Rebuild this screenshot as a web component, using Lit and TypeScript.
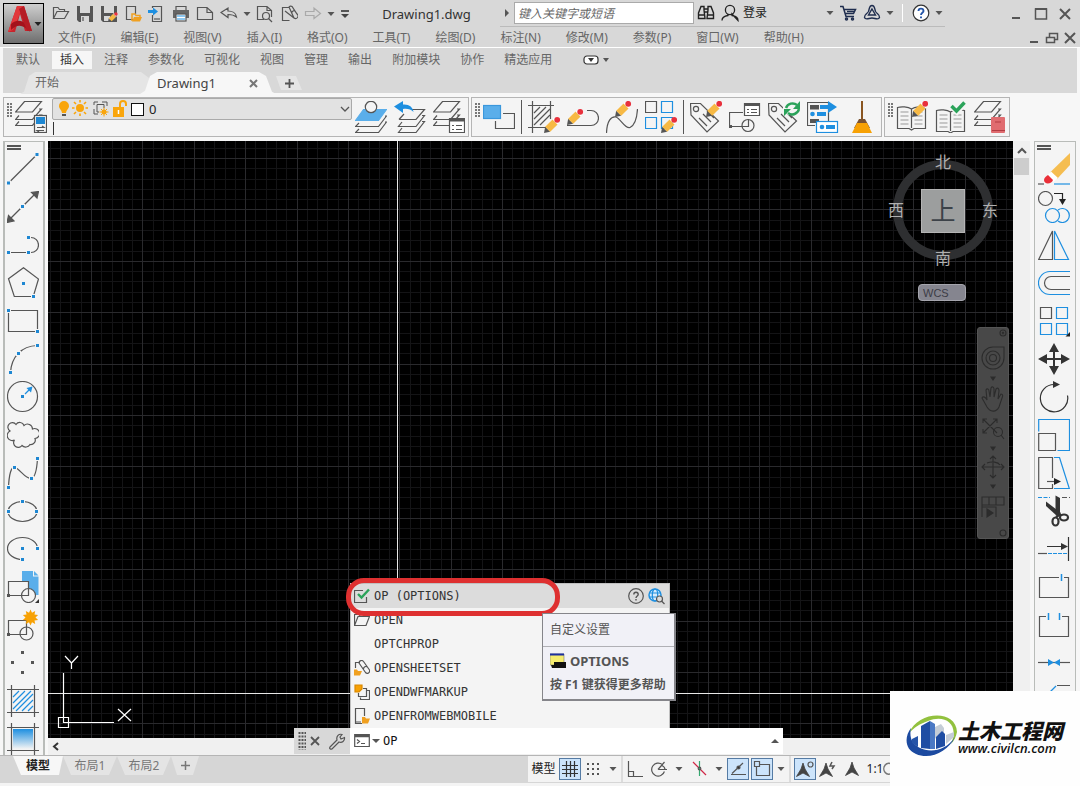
import { LitElement, html, svg, css } from "lit";
import { customElement, state } from "lit/decorators.js";

const draw = (w: number, h: number, body: unknown) =>
  html`<svg width=${w} height=${h} viewBox="0 0 ${w} ${h}" fill="none" stroke="#555" stroke-width="1.2" aria-hidden="true">${body}</svg>`;

const dot = (x: number, y: number) => svg`<rect x=${x - 2.5} y=${y - 2.5} width="5" height="5" fill="#f4f4f4" stroke="none"/><rect x=${x - 1.5} y=${y - 1.5} width="3" height="3" fill="#1e87d2" stroke="none"/>`;
const gdot = (x: number, y: number) => svg`<rect x=${x - 1.5} y=${y - 1.5} width="3" height="3" fill="#555" stroke="none"/>`;
const pencil = (x: number, y: number) => svg`<g transform="translate(${x} ${y})" stroke="none">
  <path d="M0 0L1.2 -6.2L6.2 -1.2Z" fill="#555"/><path d="M1.2 -6.2L8.6 -13.6L13.6 -8.6L6.2 -1.2Z" fill="#f7b944"/>
  <path d="M8.6 -13.6L10 -15L15 -10L13.6 -8.6Z" fill="#fff"/><circle cx="13.2" cy="-13.2" r="2.9" fill="#e8303c"/></g>`;
const sheets = (x: number, y: number) => svg`<g transform="translate(${x} ${y})">
  <path d="M9.5 .5H26.5L17.5 11H.5Z"/><path d="M4 14.5L.5 18.5H17.5L26.5 8H24"/><path d="M4 20.5L.5 24.5H17.5L26.5 14H24"/></g>`;
const burst = (x: number, y: number, r: number) => {
  const p: string[] = [];
  for (let i = 0; i < 20; i++) {
    const a = (Math.PI * i) / 10;
    const q = i % 2 ? r * 0.62 : r;
    p.push(`${(x + q * Math.sin(a)).toFixed(1)},${(y - q * Math.cos(a)).toFixed(1)}`);
  }
  return svg`<polygon points=${p.join(" ")} fill="#f7a104" stroke="none"/>`;
};
const tag = svg`<path d="M.5 2.500H10.500L28.500 20L17 31L1 14Z"/><circle cx="6" cy="8" r="2.600"/><path d="M9 17L17 25M13 13L21 21M17 10L24 17"/>`;
const book = svg`<path d="M15.500 8C12 5.500 5 5.500 1.500 6.500V27.500H13L15.500 29L18 27.500H29.500V6.500C26 5.500 19 5.500 15.500 8V27"/><path d="M4.500 11H12.500M4.500 15H12.500M4.500 19H12.500M4.500 23H12.500M18.500 11H26.500M18.500 15H26.500M18.500 19H26.500M18.500 23H26.500" stroke="#999" stroke-width="1"/>`;
const blue = "#1e8fe0";

const drawTools: [string, unknown][] = [
  ["直线", svg`<path d="M1.500 30L30 1.500"/>${dot(1.5, 30)}${dot(30, 1.5)}`],
  ["构造线", svg`<path d="M3 28L28 3"/><path d="M0 31.500L1.500 24.500L7 30ZM31.500 .500L30 7L24.500 1.500Z" fill="#555"/>${dot(15.5, 15.5)}`],
  ["多段线", svg`<path d="M1.500 23.500H24A7.500 7.500 0 0 0 24 8.500H21.500"/>${dot(1.5, 23.5)}${dot(21.5, 23.5)}${dot(21.5, 8.5)}`],
  ["多边形", svg`<path d="M16.500 .700L31.500 12L26.300 29.500H7.300L1.500 11.700Z"/>${dot(16.5, 16.5)}${dot(26.5, 29.5)}`],
  ["矩形", svg`<path d="M1.500 5.500H30.500V26.500H1.500Z"/>${dot(1.5, 5.5)}${dot(30.5, 26.5)}`],
  ["圆弧", svg`<path d="M3.500 29.500C4.500 14 14 3 30.500 2.500"/>${dot(3.5, 29.5)}${dot(11.5, 10.5)}${dot(30.5, 2.5)}`],
  ["圆", svg`<circle cx="15.500" cy="15.500" r="15"/>${dot(15.5, 15.5)}<path d="M18 13L23 8" stroke=${blue}/><path d="M25.500 5.500L24 11.500L19.500 7Z" fill=${blue} stroke="none"/>`],
  ["修订云线", svg`<path d="M3 12A4.500 4.500 0 1 1 9 5.500A4.500 4.500 0 0 1 17 6.500A5 5 0 0 1 25.500 10A5 5 0 1 1 28 19.500A4.500 4.500 0 0 1 23 25.500A5 5 0 0 1 15 26.500A4.500 4.500 0 0 1 7.500 21A4.800 4.800 0 1 1 3 12Z"/>`],
  ["样条曲线", svg`<path d="M1.500 30.500C2 18 4 9 8 10.500C13 12 18 22 24.500 21.500C29 20 30 10 30.500 1.500"/>${dot(1.5, 30.5)}${dot(7.5, 10.5)}${dot(24.5, 21.5)}${dot(30.5, 1.5)}`],
  ["椭圆", svg`<ellipse cx="15.500" cy="16.500" rx="14.500" ry="10"/>${dot(1.5, 16.5)}${dot(15.5, 6.5)}${dot(29.5, 16.5)}`],
  ["椭圆弧", svg`<path d="M30.500 15.500A15 11 0 1 0 15.500 26.500"/>${dot(15.5, 15.5)}${dot(30.5, 15.5)}${dot(15.5, 26.5)}`],
  ["插入块", svg`<path d="M15 0H26V5.500H31.500V24H15Z" fill="#5aaeea" stroke="none"/><path d="M27 0L31.500 4.500H27Z" fill="#5aaeea" stroke="none"/><path d="M1.500 10.500H21.500V24.500H1.500Z" fill="#f4f4f4"/><circle cx="21.500" cy="24.500" r="7" fill="#f4f4f4"/><path d="M14 24.500H21.500V17.500"/>${gdot(1.5, 24.5)}<path d="M32 28V32H28Z" fill="#333" stroke="none"/>`],
  ["创建块", svg`<path d="M1.500 11.500H19.500V25.500H1.500Z"/><circle cx="19.500" cy="24.500" r="6.500"/>${gdot(1.5, 25.5)}${burst(23.5, 8.5, 8)}`],
  ["点", svg`${gdot(15.5, 5.5)}${gdot(5.5, 15.5)}${gdot(25.5, 15.5)}${gdot(15.5, 25.5)}`],
  ["图案填充", svg`<path d="M0 4.500H32M0 27.500H32M4.500 0V32M27.500 0V32"/><path d="M6 12L12 6M6 18L18 6M6 24L24 6M9 26L26 9M15 26L26 15M21 26L26 21" stroke=${blue}/>`],
  ["渐变色", svg`<defs><linearGradient id="fade" x2="0" y2="1"><stop stop-color="#1e8fe0"/><stop offset="1" stop-color="#f4f4f4"/></linearGradient></defs><path d="M0 4.500H32M0 27.500H32M4.500 0V32M27.500 0V32"/><rect x="6" y="6" width="20" height="20" fill="url(#fade)" stroke="none"/>`],
];

const modifyTools: [string, unknown][] = [
  ["删除", svg`<path d="M32 0V12L19 26L12 19.500Z" fill="#f5bd50" stroke="none"/><path d="M13 18.500L20 25L15 29L9 23Z" fill="#fff" stroke="none"/><path d="M10 22L15 27C14 31 6 32 6 27C6 25 8 23 10 22Z" fill="#ea2f38" stroke="none"/><path d="M0 31H6"/><path d="M16 31H32" stroke=${blue}/>`],
  ["复制", svg`<circle cx="7.500" cy="7.500" r="7"/><path d="M16 2.500H24.500V9" stroke="#222"/><path d="M21 8H28L24.500 14Z" fill="#222" stroke="none"/><circle cx="14.500" cy="24.500" r="7" stroke=${blue}/><path d="M20 19A7 7 0 1 1 20 30" stroke=${blue}/>`],
  ["镜像", svg`<path d="M14.500 2V30.500H.700Z"/><path d="M16.500 2V30.500H30.500Z" stroke=${blue}/>`],
  ["偏移", svg`<path d="M32 4.500H12A11.500 11.500 0 0 0 12 27.500H32" stroke=${blue}/><path d="M32 9.500H13A6.500 6.500 0 0 0 13 22.500H32"/>`],
  ["阵列", svg`<path d="M2.500 2.500H13.500V13.500H2.500Z"/><path d="M18.500 2.500H29.500V13.500H18.500ZM2.500 18.500H13.500V29.500H2.500ZM18.500 18.500H29.500V29.500H18.500Z" stroke=${blue}/><path d="M32 27V31.500H27.500Z" fill="#222" stroke="none"/>`],
  ["移动", svg`<path d="M16 5V27M5 16H27" stroke="#333" stroke-width="2"/><path d="M16 0L21 9H11ZM16 32L21 23H11ZM0 16L9 11V21ZM32 16L23 11V21Z" fill="#333" stroke="none"/>`],
  ["旋转", svg`<path d="M29.500 14.500A13.700 13.700 0 1 1 16 3.500" stroke="#333"/><path d="M15 0L22 3.500L15 7Z" fill="#333" stroke="none"/>`],
  ["缩放", svg`<path d="M.700 12.500V.500H31.500V31.500H19.500" stroke=${blue}/><path d="M.700 14.500H17.500V31.500H.700Z"/>`],
  ["拉伸", svg`<path d="M14.500 21V.500H.700V31.500H14.500V27"/><path d="M16 .500H21.500L31.300 31.500H16" stroke=${blue}/><path d="M9 24.500H18"/><path d="M16 21L23 24.500L16 28Z" fill="#222" stroke="none"/>`],
  ["修剪", svg`<path d="M0 2.500H12" stroke=${blue} stroke-dasharray="4 1.500"/><path d="M24 2.500H32" stroke-dasharray="5 2"/><path d="M17.500 .500V15L20 21L22 17V3Z" fill="#333" stroke="none"/><path d="M8 6.500V11L19 21L23 18Z" fill="#333" stroke="none"/><ellipse cx="17.500" cy="26.500" rx="3" ry="4" stroke="#333" stroke-width="2.200"/><ellipse cx="26" cy="22.500" rx="4" ry="3" stroke="#333" stroke-width="2.200"/><path d="M18 22L23 19" stroke="#333" stroke-width="2.500"/>`],
  ["延伸", svg`<path d="M9 13.500H24M30.500 4V28" stroke="#333"/><path d="M23 10L30 13.500L23 17Z" fill="#333" stroke="none"/><path d="M0 20.500H9"/><path d="M10 20.500H29" stroke=${blue} stroke-dasharray="4 1"/>`],
  ["打断于点", svg`<path d="M21 6.500H1.500V26.500H30.500V6.500H26"/><path d="M23.500 3V10" stroke=${blue} stroke-width="1.500"/>`],
  ["打断", svg`<path d="M8 7.500H1.500V27.500H30.500V7.500H24"/><path d="M10.500 4V11M21.500 4V11" stroke=${blue} stroke-width="1.500"/>`],
  ["合并", svg`<path d="M0 15.500H32"/><path d="M10 12L16 15.500L10 19ZM22 12L16 15.500L22 19Z" fill=${blue} stroke="none"/>`],
  ["倒角", svg`<path d="M19 .500H32M1 20V31"/><path d="M18 1L3 16" stroke=${blue}/>`],
];

const layerTools: [string, unknown][] = [
  ["图层置为当前", svg`<path d="M8.500 8.500H31.500L23.500 19.500H.500Z" fill="#5aaeea" stroke="#5aaeea"/><circle cx="16" cy="6" r="5.700" fill="#f4f4f4"/><path d="M4 22L.500 25.500H23.500L31.500 15H30M4 28L.500 31.500H23.500L31.500 21H30"/>`],
  ["上一个图层", svg`<path d="M5 18.500H22L30.500 8.500H18M10 13L5 18.500M8 21L4.500 25.500H22L30.500 14.500H28M8 27L4.500 31.500H22L30.500 20.500H28"/><path d="M0 5.500L9 0V3.500C15 3 19 6 19.500 11C17 8 13 7.500 9 8V12Z" fill=${blue} stroke="none"/>`],
  ["图层状态", svg`${sheets(0, 0)}<path d="M16.500 17.500H31.500V31.500H16.500Z" fill="#fff"/><path d="M16.500 19H31.500" stroke-width="3"/><path d="M19 24.500H21M23 24.500H29M19 28.500H21M23 28.500H29"/>`],
];

const blockTools: [string, unknown][] = [
  ["绘图次序", svg`<rect x=".5" y="4.500" width="17" height="13" fill="#5aaeea" stroke="#3a97dc"/><path d="M20 12.500H31.500V27.500H12.500V20"/>`],
  ["编辑图案填充", svg`<path d="M0 4.500H26M0 26.500H18M4.500 0V32M22.500 0V18"/><path d="M6 12L12 6M6 18L18 6M6 24L22 8M12 24L22 14"/>${pencil(16, 32)}`],
  ["编辑多段线", svg`<path d="M0 24.500H24A7.500 7.500 0 0 0 24 9.500H20"/>${pencil(0, 24)}`],
  ["编辑样条曲线", svg`<path d="M.500 32C1 20 5 15 10 16C15 18 19 28 24 26.500C29 24 31 16 31.500 8"/>${pencil(9, 16)}`],
  ["编辑阵列", svg`<path d="M.500 .500H11.500V11.500H.500Z"/><path d="M16.500 .500H27.500V11.500H16.500ZM.500 16.500H11.500V27.500H.500ZM27.500 22V27.500H16.500V16.500H27.500Z" stroke=${blue}/>${pencil(16, 32)}`],
  ["编辑属性", svg`${tag}${pencil(16, 16)}`],
  ["块属性管理器", svg`<path d="M14 11.500H.500V25.500H19.500V18"/><circle cx="19" cy="24.500" r="6"/>${gdot(1.5, 25.5)}<path d="M15.500 2.500H30.500V14.500H15.500Z" fill="#fff"/><path d="M15.500 3.500H30.500" stroke-width="3"/><path d="M18 8.500H20M22 8.500H28M18 11.500H20M22 11.500H28"/>`],
  ["同步属性", svg`${tag}<path d="M15 1H32V14H20L15 9Z" fill="#f4f4f4" stroke="none"/><path d="M18 7A7 7 0 0 1 29 4M31 8A7 7 0 0 1 20 12" stroke="#2ba35a" stroke-width="2.500"/><path d="M32 0V8H25ZM16 15V8H23Z" fill="#2ba35a" stroke="none"/>`],
  ["数据提取", svg`<path d="M8 24.500H.500V1.500H21.500V20"/><rect x="3" y="4" width="9" height="4.500" fill="#555" stroke="none"/><rect x="3" y="18" width="9" height="4" fill="#555" stroke="none"/><path d="M13 4H21V0L30 6L21 12V8H13Z" fill=${blue} stroke="none"/><circle cx="5.500" cy="13" r="2.300" fill=${blue} stroke="none"/><rect x="10" y="11" width="9" height="4" fill=${blue} stroke="none"/><rect x="9.500" y="20.500" width="21" height="11" fill="#fff" stroke=${blue}/><circle cx="15" cy="26" r="2.300" fill=${blue} stroke="none"/><rect x="19" y="24" width="9" height="4" fill=${blue} stroke="none"/>`],
  ["清理", svg`<path d="M16 0V19" stroke="#8a5520" stroke-width="2"/><path d="M13 18H19L24 27H8Z" fill="#7a5230" stroke="none"/><path d="M11 22H21L26 32H6Z" fill="#f7a104" stroke="none"/>`],
];

const standardTools: [string, unknown][] = [
  ["编辑标准", svg`${book}${pencil(16, 16)}`],
  ["检查标准", svg`<g transform="translate(0 3)">${book}</g><path d="M17 5L22 10L30 1" stroke="#f4f4f4" stroke-width="7"/><path d="M16.500 5L21.500 10L29.500 1.500" stroke="#2ba35a" stroke-width="3.500"/>`],
  ["图层转换器", svg`${sheets(0, 0)}<rect x="17" y="16" width="14" height="16" rx="1" fill="#e06c70" stroke="none"/><path d="M21 21H27M18 29.500H31" stroke="#b23c42"/>`],
];

const pageCurl = svg`<path d="M9 2.500H2.500V15.500H9.500M9 2L14 13A2.400 2.400 0 0 0 17 9L12 1.500A2 2 0 0 0 9 2ZM14 13L5 6M12 7.500A2 2 0 0 1 15 6"/>`;
const quick: [string, unknown][] = [
  ["新建", svg`<path d="M1.500 13.500V2.500H6L7.500 4.500H12.500V6.500M1.500 13.500L5 6.500H16.500L12.500 13.500Z"/>`],
  ["保存", svg`<path d="M1 1H17V17H3L1 15Z" fill="#555" stroke="none"/><rect x="4" y="1" width="10" height="7" fill="#d8d8d8" stroke="none"/><rect x="5" y="11" width="8" height="6" fill="#d8d8d8" stroke="none"/><path d="M7 12V16"/>`],
  ["另存为", svg`<path d="M1 1H17V17H3L1 15Z" fill="#555" stroke="none"/><rect x="4" y="1" width="10" height="7" fill="#d8d8d8" stroke="none"/><rect x="4" y="11" width="6" height="5" fill="#d8d8d8" stroke="none"/><g transform="translate(8 17) scale(.600)">${pencil(0, 0)}</g>`],
  ["从移动端打开", svg`<path d="M9 14.500H2.500V1.500H11.500V9"/><path d="M8 16V9H11L12 10.500H16V12" stroke="#f0a020" stroke-width="1.500"/><path d="M8 16.500L10 12H18L16 16.500Z" fill="#f0a020" stroke="none"/>`],
  ["保存到移动端", svg`<path d="M4.500 3V1.500H13.500V16.500H4.500V10"/><path d="M6 14H12" /><path d="M0 5H5V2.500L10 6.500L5 10.500V8H0Z" fill=${blue} stroke="none"/>`],
  ["打印", svg`<path d="M4 5V1.500H14V5" /><path d="M1 5H17V13H1Z" fill="#666" stroke="none"/><rect x="4" y="9" width="10" height="7" fill="#fff"/><path d="M5 11H13M5 14H13" stroke=${blue}/>`],
  ["页面", svg`<path d="M1.500 14.500V2.500H11L16.500 7.500V14.500ZM11 2.500V7.500H16.500"/>`],
  ["放弃", svg`<path d="M1 7.500L8 3V6C12 6 16 8 16.500 12C14 10 11 9.500 8 9.500V12.500Z"/>`],
];

@customElement("app-root")
export class AppRoot extends LitElement {
  @state() private command = "OP";

  static styles = css`
    * { box-sizing: border-box; }
    :host { display: flex; flex-direction: column; height: 100vh; min-height: 600px; position: relative; overflow: hidden; background: #f7f7f7; color: #555; font: 12px/18px "Noto Sans", "Noto Sans CJK SC", sans-serif; }
    button { font: inherit; color: inherit; background: none; border: 0; padding: 0; display: inline-flex; align-items: center; justify-content: center; flex: none; }
    a { color: inherit; text-decoration: none; }
    svg { display: block; flex: none; }
    .header { display: flex; background: #d8d8d8; border-bottom: 1px solid #fff; height: 48px; padding: 3px 0 0 3px; flex: none; }
    .app-menu { width: 41px; height: 41px; border: 1px solid #000; background: linear-gradient(#cfcfcf, #6e6e6e); }
    .header-rows { flex: 1; min-width: 0; margin-top: -3px; }
    .title-row { display: flex; align-items: center; height: 27px; }
    .quick { display: flex; align-items: center; padding-left: 5px; flex: none; }
    .quick button { width: 24px; height: 24px; }
    .quick .drop { width: 12px; }
    .quick .arrow { width: 16px; }
    .title { flex: 1; text-align: center; font-size: 13px; line-height: 24px; color: #333; white-space: nowrap; }
    .info { display: flex; align-items: center; height: 26px; border-bottom: 1px solid #bbb; flex: none; color: #222; }
    .info button { height: 24px; }
    .drop { width: 12px; }
    .arrow { width: 14px; }
    .search { width: 180px; height: 22px; border: 1px solid #aaa; background: #fff; font: italic 12px/18px "Noto Sans", "Noto Sans CJK SC", sans-serif; padding: 0 3px; }
    .search::placeholder { color: #666; opacity: 1; }
    .w24 { width: 24px; }
    .info .login { gap: 4px; padding: 0 57px 0 3px; }
    .vline { width: 1px; height: 18px; background: #fff; margin: 0 6px; }
    .window { display: flex; width: 135px; justify-content: flex-end; padding-right: 3px; flex: none; }
    .window button { width: 24px; height: 24px; }
    .menu-row { display: flex; align-items: center; height: 20px; padding: 1px 0 0 14px; color: #666; }
    .menus { display: flex; gap: 25px; flex: 1; white-space: nowrap; }
    .doc-window { display: flex; padding-right: 1px; }
    .doc-window button { width: 18px; height: 18px; }
    .ribbon { background: #d8d8d8; margin: 0 3px; height: 45px; padding-top: 3px; flex: none; color: #666; }
    .ribbon-tabs { display: flex; gap: 4px; padding-left: 5px; height: 18px; }
    .ribbon-tabs button { padding: 0 8px; }
    .ribbon-tabs .on { background: #f6f6f6; color: #333; }
    .ribbon-tabs .more { margin-left: 11px; gap: 4px; }
    .files { display: flex; padding: 3px 0 0 17px; height: 25px; align-items: flex-end; font-size: 12px; }
    .file { display: flex; align-items: center; height: 22px; width: 129px; padding: 0 15px; background: #e5e5e5; clip-path: polygon(0 100%, 4px 90%, 9px 18%, 15px 0, calc(100% - 8px) 0, 100% 6px, 100% 100%); }
    .file.on { width: 136px; margin-left: -9px; padding-left: 17px; font-size: 13px; color: #444; background: #f7f7f7; justify-content: space-between; padding-right: 18px; clip-path: polygon(0 100%, 5px 85%, 10px 18%, 17px 0, calc(100% - 17px) 0, calc(100% - 10px) 18%, calc(100% - 4px) 90%, 100% 100%); }
    .file.add { width: 26px; height: 14px; margin-bottom: 4px; padding: 0; justify-content: center; clip-path: polygon(0 0, 20px 0, 26px 100%, 5px 100%); }
    .bars { display: flex; gap: 2px; padding: 4px 3px; height: 48px; flex: none; }
    .bar { display: flex; height: 40px; align-items: center; gap: 7px; border: 1px solid #b5b5b5; background: #f4f4f4; padding: 0 3px; }
    .bar button { width: 32px; height: 32px; }
    .grip { width: 5px; height: 15px; align-self: flex-start; margin: 5px -4px 0 0; background: radial-gradient(circle at 1px 1px, #777 1px, transparent 1px) 0 0 / 3px 3px; }
    .rule { width: 1px; height: 34px; background: #555; margin: 0 -1px; }
    .layer { position: relative; align-self: flex-start; width: 300px; margin: 0 -4px 0 -2px; }
    .layer::after { content: ""; position: absolute; left: 1px; top: 24px; height: 13px; border-left: 1px solid #333; }
    .layer select { appearance: none; display: block; width: 100%; height: 22px; background: #e2e2e2; border: 1px solid #aaa; border-radius: 2px; color: #222; font: 13px/18px "Noto Sans", sans-serif; padding: 0 20px 0 96px; }
    .layer-icons { position: absolute; left: 4px; top: 2px; pointer-events: none; }
    .layer-drop { position: absolute; right: 2px; top: 7px; pointer-events: none; }
    .main { display: flex; flex: 1; min-height: 0; padding: 0 4px 0 3px; }
    .side { width: 42px; border: 2px solid #b9bcb9; border-width: 1px 2px 0; padding: 11px 2px 0; display: flex; flex-direction: column; gap: 6px; flex: none; overflow: hidden; background: #f4f4f4; position: relative; }
    .side button { width: 32px; height: 32px; }
    .side::before { content: ""; position: absolute; left: 2px; top: 3px; width: 14px; height: 5px; background: radial-gradient(circle at 1px 1px, #555 1px, transparent 1px) 0 0 / 2px 3px; }
    .right { border-width: 1px; padding-left: 3px; }
    .work { flex: 1; min-width: 0; margin: 0 4px 0 3px; display: grid; grid-template: 1fr 17px / 1fr 17px; position: relative; background: #f0f0f0; }
    .canvas { background: #000; position: relative; overflow: hidden; }
    .grid { position: absolute; inset: 0; width: 100%; height: 100%; }
    .ucs { position: absolute; left: 8px; bottom: 0; overflow: visible; }
    .cube { position: absolute; right: 14px; top: 12px; width: 112px; height: 115px; display: grid; grid-template: 19px 1fr 19px / 18px 1fr 18px; place-items: center; font-size: 16px; line-height: 19px; color: #b0b0b0; }
    .ring { position: absolute; left: 6px; top: 7px; width: 100px; height: 100px; border: 9px solid #2e2f31; border-radius: 50%; }
    .cube button { z-index: 1; }
    .north { grid-area: 1 / 2; } .west { grid-area: 2 / 1; } .east { grid-area: 2 / 3; } .south { grid-area: 3 / 2; }
    .top { grid-area: 2 / 2; width: 44px; height: 44px; background: #9c9e9e; border: 1px solid #b4b4b4; color: #3c4248; font-size: 25px; }
    .wcs { position: absolute; right: 47px; top: 143px; width: 48px; height: 17px; background: #85858f; border: 1px solid #a5a5ad; border-radius: 4px; color: #3c3c46; font: 11px/14px "Liberation Sans", sans-serif; justify-content: flex-start; padding-left: 4px; }
    .nav { position: absolute; right: 4px; top: 186px; width: 32px; background: #484848; border: 1px solid #555; border-radius: 3px; }
    .vscroll { display: flex; flex-direction: column; align-items: center; padding-top: 6px; gap: 4px; }
    .thumb { width: 15px; height: 17px; background: #cdcdcd; }
    .hscroll { padding: 4px 3px; }
    .prompt { position: absolute; left: 246px; bottom: 1px; width: 489px; z-index: 2; }
    .list { list-style: none; margin: 0 0 0 56px; padding: 0; width: 320px; background: #f4f4f4; border: 1px solid #c0c0c0; border-bottom: 0; color: #333; font: 12px/24px "DejaVu Sans Mono", monospace; }
    .list li { display: flex; align-items: center; height: 24px; padding: 0 4px 0 3px; gap: 4px; }
    .list .pick { background: #dcdcdc; }
    .pick .spacer { flex: 1; }
    .line { display: flex; height: 26px; background: #fff; align-items: center; }
    .handle { display: flex; width: 56px; height: 26px; background: #d8d8d8; align-items: center; justify-content: space-between; padding: 0 4px 0 4px; }
    .close-line { margin-right: 5px; }
    .line input { flex: 1; min-width: 0; border: 0; outline: 0; padding: 0; background: none; color: #111; font: 12px/24px "DejaVu Sans Mono", monospace; }
    .term { padding: 0 3px 0 4px; gap: 2px; }
    .expand { width: 16px; }
    .callout { position: absolute; left: 52px; top: -5px; width: 214px; height: 38px; border: 5px solid #de3030; border-radius: 18px; z-index: 3; }
    .tip { position: absolute; left: 248px; top: 30px; width: 134px; height: 88px; border: 2px solid #85858a; border-width: 1px 2px 2px 1px; background: #f1f1f7; z-index: 4; color: #555; }
    .tip-head { padding: 7px 7px; height: 33px; border-bottom: 1px solid #b0b0b5; }
    .tip-body { padding: 2px 7px; font-weight: 700; line-height: 24px; white-space: nowrap; }
    .tip-name { display: flex; gap: 4px; align-items: center; font-size: 13px; }
    .foot { display: flex; height: 31px; border-top: 1px solid #b5b5b5; padding-left: 3px; flex: none; background: linear-gradient(#d6d6d6 27px, #f4f4f4 27px); }
    .layouts { display: flex; width: 525px; height: 19px; padding-left: 10px; }
    .layouts button { width: 54px; background: #e4e4e4; color: #777; clip-path: polygon(0 0, 100% 0, 46px 100%, 8px 100%); }
    .layouts .on { background: #f7f7f7; color: #222; font-weight: 700; width: 50px; }
    .layouts .plus { width: 28px; clip-path: polygon(0 0, 100% 0, 22px 100%, 6px 100%); }
    .status { display: flex; flex: 1; min-width: 0; height: 26px; align-items: center; background: #f3f3f3; color: #222; }
    .status button { height: 22px; width: 24px; }
    .status .space { width: 31px; }
    .status .set { width: 22px; background: #cce4fb; border: 1px solid #557ba4; }
    .status .set + .set { margin-left: 2px; }
    .status .caret { width: 16px; }
    .status .sep { width: 2px; height: 26px; background: #dcdcdc; }
    .status .sep.wide { margin-right: 3px; }
    .status .scale { width: 22px; margin-right: -4px; }
    .brand { position: absolute; right: 0; bottom: 0; width: 190px; height: 95px; background: #fefefe; z-index: 5; display: flex; align-items: center; padding: 0 0 3px 16px; color: #111; white-space: nowrap; }
    .brand-name { font: italic 900 21px/22px "Noto Sans CJK SC", sans-serif; }
    .brand-url { font: italic 600 13px/14px "Open Sans", sans-serif; }
  `;

  private tools(list: [string, unknown][], w = 32) {
    return list.map(([name, body]) => html`<button aria-label=${name}>${draw(w, w, body)}</button>`);
  }

  private caret(cls = "drop") {
    return html`<button class=${cls} aria-label="展开">${draw(8, 6, svg`<path d="M.5 1H7.500L4 5Z" fill="#555" stroke="none"/>`)}</button>`;
  }

  private gridLines() {
    let minor = "";
    let major = "";
    for (let i = -4; i < 240; i++) {
      const x = Math.round(43 + (i * 257) / 25) + 0.5;
      const y = Math.round(17 + (i * 257) / 25) + 0.5;
      const d = `M${x} 0V2400M0 ${y}H2400`;
      if (i % 5 === 0) major += d;
      else minor += d;
    }
    return svg`<path d=${minor} stroke="#141416"/><path d=${major} stroke="#2a2a2d"/>`;
  }

  private header() {
    const menus = ["文件(F)", "编辑(E)", "视图(V)", "插入(I)", "格式(O)", "工具(T)", "绘图(D)", "标注(N)", "修改(M)", "参数(P)", "窗口(W)", "帮助(H)"];
    return html`<header class="header">
      <button class="app-menu" aria-label="应用程序">${draw(39, 39, svg`<g stroke="none"><path d="M13 2H20L28 27H21L16 10L11 28H4Z" fill="#c8242c"/><path d="M13 2L4 28L9 26L17 7L20 2Z" fill="#e2383c"/><path d="M7 20C13 15 19 16 23 22L26 28C19 20 13 20 7 26Z" fill="#a3131c"/><path d="M15 5L23 27L28 27L20 2Z" fill="#b51c24"/><path d="M30.500 18H37.500L34 22Z" fill="#222"/></g>`)}</button>
      <div class="header-rows">
        <div class="title-row">
          <div class="quick">
            ${this.tools(quick, 18)}${this.caret()}
            ${this.tools([
              ["预览", svg`<path d="M8 14.500H1.500V1.500H11L15.500 5.500V12M11 1.500V5.500H15.500"/><circle cx="10" cy="11" r="3.500"/><path d="M12.500 13.500L16 17"/>`],
              ["图纸集", pageCurl],
              ["重做", svg`<path d="M1.500 6.500H10V3L16.500 8.500L10 13.500V10.500H1.500Z" stroke="#aaa"/>`],
            ], 18)}${this.caret()}
            <button class="arrow" aria-label="自定义">${draw(10, 10, svg`<path d="M1 2H9" stroke-width="2"/><path d="M1 5H9L5 9Z" fill="#444" stroke="none"/>`)}</button>
          </div>
          <div class="title">Drawing1.dwg</div>
          <div class="info">
            <button class="arrow" aria-label="收拢">${draw(6, 8, svg`<path d="M1 0L5 4L1 8Z" fill="#555" stroke="none"/>`)}</button>
            <input class="search" aria-label="搜索" placeholder="键入关键字或短语" />
            <button class="w24" aria-label="查找">${draw(18, 18, svg`<g stroke="#222" stroke-width="1.400"><path d="M4 2.500H7V6L8 14.500H1.500V9ZM14 2.500H11V6L10 14.500H16.500V9Z"/><path d="M7 5H11M7 8H11M1.500 11H7.500M10.500 11H16.500"/></g>`)}</button>
            <button class="login">${draw(18, 18, svg`<g stroke="#222" stroke-width="1.300"><circle cx="9" cy="6" r="4.600"/><path d="M1 16.500C1 13 4 12 7 11.500V10M11 10V11.500C14 12 17 13 17 16.500Z"/></g>`)}登录</button>
            ${this.caret()}
            <button class="w24" aria-label="商店">${draw(18, 18, svg`<g stroke="#1f2d4e" stroke-width="1.500"><path d="M1 2.500H4L7 12.500H15M5 5.500H16.500L14.500 9.500H6.500"/><path d="M8 7.500H15"/><circle cx="7.500" cy="15" r="1"/><circle cx="13.500" cy="15" r="1"/></g>`)}</button>
            <button class="w24" aria-label="应用">${draw(18, 18, svg`<g stroke="#1f2d4e" stroke-width="1.400"><path d="M9 1.500C12 1.500 11.500 5 12.500 7.500C14 10 17 10.500 16.500 13.500C15.500 16.500 12 14 9 14C6 14 2.500 16.500 1.500 13.500C1 10.500 4 10 5.500 7.500C6.500 5 6 1.500 9 1.500Z"/><path d="M9 5L12.500 11H5.500Z"/></g>`)}</button>
            ${this.caret()}
            <span class="vline"></span>
            <button class="w24" aria-label="帮助">${draw(18, 18, svg`<circle cx="9" cy="9" r="7.800" fill="#fff" stroke="#333"/><path d="M6.500 7C6.500 3.800 11.500 3.800 11.500 7C11.500 8.800 9 8.800 9 11M9 12.500V14.300" stroke="#2455a8" stroke-width="1.900"/>`)}</button>
            ${this.caret()}
          </div>
          <div class="window">
            <button aria-label="最小化">${draw(12, 12, svg`<path d="M1 10H9" stroke-width="2"/>`)}</button>
            <button aria-label="最大化">${draw(14, 14, svg`<path d="M1.500 2H12.500V12H1.500Z" stroke-width="1.500"/><path d="M1 2H13" stroke-width="2"/>`)}</button>
            <button aria-label="关闭">${draw(12, 12, svg`<path d="M1 1L11 11M11 1L1 11" stroke-width="2"/>`)}</button>
          </div>
        </div>
        <div class="menu-row">
          <nav class="menus">${menus.map((m) => html`<a href="#">${m}</a>`)}</nav>
          <div class="doc-window">
            <button aria-label="最小化图形">${draw(12, 12, svg`<path d="M2 10H10" stroke-width="2"/>`)}</button>
            <button aria-label="还原图形">${draw(14, 12, svg`<path d="M1.500 5.500H9.500V10.500H1.500ZM4.500 5V1.500H12.500V7.500H10" stroke-width="1.500"/>`)}</button>
            <button aria-label="关闭图形">${draw(12, 12, svg`<path d="M1 1L11 11M11 1L1 11" stroke-width="2"/>`)}</button>
          </div>
        </div>
      </div>
    </header>`;
  }

  private ribbon() {
    const tabs = ["默认", "插入", "注释", "参数化", "可视化", "视图", "管理", "输出", "附加模块", "协作", "精选应用"];
    return html`<section class="ribbon">
      <nav class="ribbon-tabs">
        ${tabs.map((t, i) => html`<button class=${i === 1 ? "on" : ""}>${t}</button>`)}
        <button class="more" aria-label="功能区选项">${draw(16, 10, svg`<rect x="1" y="1" width="14" height="8" rx="3" fill="#fff" stroke="#333"/><path d="M5 3H11L8 7Z" fill="#333" stroke="none"/>`)}${draw(6, 4, svg`<path d="M0 0H6L3 4Z" fill="#555" stroke="none"/>`)}</button>
      </nav>
      <div class="files">
        <div class="file">开始</div>
        <div class="file on"><span>Drawing1</span><button aria-label="关闭文件">${draw(9, 9, svg`<path d="M1 1L8 8M8 1L1 8" stroke="#777" stroke-width="2"/>`)}</button></div>
        <button class="file add" aria-label="新图形">${draw(9, 9, svg`<path d="M4.500 0V9M0 4.500H9" stroke-width="1.800"/>`)}</button>
      </div>
    </section>`;
  }

  private toolbars() {
    return html`<section class="bars">
      <div class="bar">
        <span class="grip"></span>
        <button aria-label="图层特性">${draw(32, 32, svg`${sheets(0, 0)}<rect x="19.500" y="14.500" width="12" height="17" fill="#f4f4f4"/><rect x="21" y="16" width="9" height="7" fill="#1e87d2" stroke="none"/><path d="M22 26.500H29L27 25M29 29.500H22L24 31"/>`)}</button>
        <div class="layer">
          <select aria-label="图层"><option>0</option></select>
          <svg class="layer-icons" width="90" height="18" viewBox="0 0 90 18" fill="none" aria-hidden="true">
            <path d="M3 6A5 5 0 1 1 13 6C13 9 10.500 9.500 10 13H6C5.500 9.500 3 9 3 6Z" fill="#f9a50b"/><rect x="6" y="14" width="4" height="2" fill="#555"/>
            <circle cx="24" cy="8" r="4" fill="#f9a50b"/><path d="M24 0V2.500M24 13.500V16M16 8H18.500M29.500 8H32M18 2L20 4M28 12L30 14M30 2L28 4M18 14L20 12" stroke="#f9a50b" stroke-width="1.600"/>
            <path d="M38 5V2H42M46 2H51V6M38 9V14H42M41 4.500H48V8M41 4.500V12H43" stroke="#555"/><circle cx="48" cy="12" r="2.500" fill="#f9a50b"/><path d="M48 7.500V16.500M43.500 12H52.500M45 9L51 15M51 9L45 15" stroke="#f9a50b"/>
            <path d="M57 7H68V17H57Z" fill="#f9a50b"/><path d="M64 7V4A3 3 0 0 1 70 4V6" stroke="#f9a50b" stroke-width="2"/><path d="M62.500 10V14" stroke="#fff" stroke-width="1.500"/>
            <rect x="75.500" y="3.500" width="12" height="12" fill="#fff" stroke="#111"/>
          </svg>
          <svg class="layer-drop" width="10" height="8" viewBox="0 0 10 8" fill="none" stroke="#555" stroke-width="1.300" aria-hidden="true"><path d="M1 2L5 6L9 2"/></svg>
        </div>
        ${this.tools(layerTools)}
      </div>
      <div class="bar">
        <span class="grip"></span>
        ${this.tools(blockTools.slice(0, 1))}<span class="rule"></span>
        ${this.tools(blockTools.slice(1, 5))}<span class="rule"></span>
        ${this.tools(blockTools.slice(5))}
      </div>
      <div class="bar"><span class="grip"></span>${this.tools(standardTools)}</div>
    </section>`;
  }

  private canvas() {
    return html`<div class="canvas">
      <svg class="grid" aria-hidden="true">${this.gridLines()}<path d="M349.500 0V552M0 552.500H2400" stroke="#e8e8e8"/></svg>
      <svg class="ucs" width="80" height="80" viewBox="0 0 80 80" fill="none" stroke="#fff" aria-hidden="true">
        <path d="M7.500 15V64.500H58M2.500 59.500H12.500V69.500H2.500ZM62 51L75 63M75 51L62 63" stroke-width="1.200"/><path d="M9 -2L15.500 5L22 -2M15.500 5V11" stroke-width="1.200"/>
      </svg>
      <div class="cube">
        <span class="ring"></span>
        <button class="north">北</button><button class="west">西</button><button class="top">上</button><button class="east">东</button><button class="south">南</button>
      </div>
      <button class="wcs">WCS</button>
      <div class="nav">${draw(30, 210, svg`<g stroke="#2c2c2c" stroke-width="1.100">
        <circle cx="25" cy="5" r="3"/><path d="M24 4L26 6M26 4L24 6"/>
        <path d="M15 19H26V30A11 11 0 1 1 15 19Z"/><circle cx="15" cy="30" r="7"/><circle cx="15" cy="30" r="3.500"/>
        <path d="M13 49H17L15 52Z" fill="#2c2c2c"/>
        <path d="M9 79L4 70C5 68 8 69 9 72L8 62C9 60 11 61 11 63L12 69L13 60C14 58 16 59 16 61V69L18 61C20 59 21 61 21 63L20 71L23 66C25 66 25 68 24 70L21 79C18 85 12 84 9 79Z"/>
        <path d="M5 91L19 105M19 91L5 105M5 95V91H9M15 91H19V95M5 101V105H9"/><circle cx="20" cy="104" r="4.500"/><path d="M23 107L26 111"/>
        <path d="M13 119H17L15 122Z" fill="#2c2c2c"/>
        <path d="M15 128V150M12 131L15 128L18 131M12 147L15 150L18 147M7 136L4 139L7 142M23 136L26 139L23 142M4 139H26M9 135C14 133 20 134 22 137"/>
        <path d="M13 157H17L15 160Z" fill="#2c2c2c"/>
        <path d="M4 169H11V177H4ZM11 169H18V177H11ZM18 169H26V177H18ZM4 177V189M4 179H18V189"/><path d="M9 181L15 185L9 189Z" fill="#2c2c2c"/>
        <circle cx="25" cy="205" r="3"/></g>`)}</div>
    </div>`;
  }

  private prompt() {
    const items: [string, unknown][] = [
      ["OPEN", svg`<path d="M.500 13.500V2.500H5L6.500 4.500H11M.500 13.500L4 4.500H15.500L12 13.500Z"/>`],
      ["OPTCHPROP", ""],
      ["OPENSHEETSET", svg`<path d="M1.500 8V2.500H6M5 3L11.500 12.500A2.400 2.400 0 0 0 15.500 10L9.500 1.500A2.500 2.500 0 0 0 5 3ZM9.500 9A2.500 2.500 0 0 1 13.500 7"/><path d="M0 15.500V9.500H3L4 11H8L6 15.500Z" fill="#f0a020" stroke="none"/>`],
      ["OPENDWFMARKUP", svg`<path d="M1 1H8V5L5 8H1Z" fill="#f7a104" stroke="#d98800"/><path d="M9 4.500H12.500V12.500H4.500V9M13 6.500H15.500V15.500H6.500V13.500"/>`],
      ["OPENFROMWEBMOBILE", svg`<path d="M8 15.500H1.500V.500H10.500V8M2 14H7"/><path d="M8 15.500V9H11L12 10.500H16L14 15.500Z" fill="#f0a020" stroke="none"/>`],
    ];
    return html`<div class="prompt">
      <ul class="list">
        <li class="pick">${draw(16, 16, svg`<path d="M9 2.500H.500V14.500H12.500V9"/><path d="M4 6L7.500 9.500L15 1.500" stroke="#2ba35a" stroke-width="2.400"/>`)}<span>OP (OPTIONS)</span><span class="spacer"></span>
          <button aria-label="帮助">${draw(16, 16, svg`<circle cx="8" cy="8" r="7.300"/><path d="M5.800 6.500C5.800 3.500 10.200 3.500 10.200 6.500C10.200 8 8 8 8 10M8 11V12.500" stroke-width="1.400"/>`)}</button>
          <button aria-label="联机搜索">${draw(17, 17, svg`<circle cx="7" cy="7" r="6" fill="#d8eafa" stroke=${blue} stroke-width="1.500"/><ellipse cx="7" cy="7" rx="2.700" ry="6" stroke=${blue}/><path d="M1 5H13M1 9H13" stroke=${blue}/><circle cx="11.500" cy="11" r="3" fill="#dcdcdc"/><path d="M13.500 13L16.500 16"/>`)}</button>
        </li>
        ${items.map(([name, body]) => html`<li>${draw(16, 16, body)}<span>${name}</span></li>`)}
      </ul>
      <div class="line">
        <div class="handle">
          ${draw(8, 18, svg`<path d="M1.500 0V18M4.500 0V18M7.500 0V18" stroke-width="2" stroke-dasharray="2 1.500"/>`)}
          <button class="close-line" aria-label="关闭命令行">${draw(10, 10, svg`<path d="M1 1L9 9M9 1L1 9" stroke-width="1.800"/>`)}</button>
          <button aria-label="自定义命令行">${draw(18, 18, svg`<path d="M2 15L9 8C8 4 11 1.500 14 2.500L12 5L13 7L16.500 5.500C17 9 14 11 11 10L4 17C2.500 17.500 1 16.500 2 15Z"/>`)}</button>
        </div>
        <button class="term" aria-label="最近使用的命令">${draw(16, 14, svg`<path d="M.700 .700H15.300V12.500H.700Z"/><path d="M1 2H15" stroke-width="2.500"/><path d="M3 5.500L5.500 7.500L3 9.500M7 9.500H11"/>`)}${draw(8, 6, svg`<path d="M0 1H8L4 5Z" fill="#555" stroke="none"/>`)}</button>
        <input aria-label="命令" .value=${this.command} @input=${(e: Event) => (this.command = (e.target as HTMLInputElement).value)} />
        <button class="expand" aria-label="历史记录">${draw(8, 6, svg`<path d="M0 5H8L4 1Z" fill="#555" stroke="none"/>`)}</button>
      </div>
      <div class="callout"></div>
      <aside class="tip">
        <div class="tip-head">自定义设置</div>
        <div class="tip-body">
          <div class="tip-name">${draw(16, 16, svg`<path d="M0 1H14V12H0Z" fill="#f5ec6e" stroke="#777" stroke-width=".6"/><path d="M0 1.500H14" stroke="#1c2fa0" stroke-width="2"/><path d="M1 12H4V9H16V15H2Z" fill="#111" stroke="none"/>`)}OPTIONS</div>
          <div>按 F1 键获得更多帮助</div>
        </div>
      </aside>
    </div>`;
  }

  private footer() {
    const person = svg`<path d="M8 2L10 8L14.500 15.500L8 12L1.500 15.500L6 8Z" fill="#444" stroke="#444" stroke-width=".8"/>`;
    return html`<footer class="foot">
      <nav class="layouts"><button class="on">模型</button><button>布局1</button><button>布局2</button><button class="plus" aria-label="新建布局">${draw(9, 9, svg`<path d="M4.500 0V9M0 4.500H9" stroke="#777" stroke-width="1.500"/>`)}</button></nav>
      <div class="status">
        <button class="space">模型</button>
        <button class="set" aria-label="栅格">${draw(18, 18, svg`<path d="M5.500 1V17M9.500 1V17M13.500 1V17M1 5.500H17M1 9.500H17M1 13.500H17" stroke="#333"/>`)}</button>
        <button aria-label="捕捉">${draw(16, 16, svg`<path d="M2 3H16M2 8H16M2 13H16" stroke-width="2" stroke-dasharray="2 3"/>`)}</button>
        ${this.caret("caret")}<span class="sep"></span>
        <button aria-label="正交">${draw(18, 18, svg`<path d="M2.500 1V16.500H17M2.500 11.500H7.500V16.500"/>`)}</button>
        <button aria-label="极轴">${draw(18, 18, svg`<path d="M12.500 4.700A6.500 6.500 0 1 0 14.400 11.500M8 9.500H17M8 9.500L14.500 2M12 5.500C14 6.500 15 8 15 9.500"/>`)}</button>
        ${this.caret("caret")}
        <button aria-label="等轴测">${draw(18, 18, svg`<path d="M3 2L16 15" stroke="#d02848"/><path d="M9.500 1V16" stroke="#35a870"/><circle cx="9.500" cy="8.500" r="1.300"/>`)}</button>
        ${this.caret("caret")}
        <button class="set" aria-label="对象捕捉追踪">${draw(18, 18, svg`<path d="M2 14.500H17M3 13.500L14 3"/><circle cx="9.500" cy="7.500" r="1.500" fill="#333"/>`)}</button>
        <button class="set" aria-label="对象捕捉">${draw(18, 18, svg`<path d="M6 4.500H16.500V15.500H3.500V7M1.500 1.500H6.500V6.500H1.500Z"/>`)}</button>
        ${this.caret("caret")}<span class="sep wide"></span>
        <button class="set" aria-label="注释可见性">${draw(18, 18, svg`<g transform="translate(-1 1)">${person}</g><circle cx="14.500" cy="4.500" r="2.500"/>`)}</button>
        <button aria-label="自动缩放">${draw(18, 18, svg`<g transform="translate(-1 1)">${person}</g><path d="M13 2L11 6H15L13 9" stroke-width="1.500"/>`)}</button>
        <button aria-label="注释">${draw(16, 18, person)}</button>
        <button class="scale">1:1</button>
        ${draw(12, 16, svg`<path d="M10 3.500A5 5.500 0 1 0 10 12" stroke="#777" stroke-width="1.500"/>`)}
      </div>
    </footer>`;
  }

  render() {
    return html`
      ${this.header()}${this.ribbon()}${this.toolbars()}
      <main class="main">
        <div class="side">${this.tools(drawTools)}</div>
        <div class="work">
          ${this.canvas()}
          <div class="vscroll">${draw(10, 7, svg`<path d="M1 6L5 2L9 6" stroke-width="2"/>`)}<span class="thumb"></span></div>
          <div class="hscroll">${draw(10, 9, svg`<path d="M7 1L3 4.500L7 8" stroke="#333" stroke-width="2"/>`)}</div>
          ${this.prompt()}
        </div>
        <div class="side right">${this.tools(modifyTools)}</div>
      </main>
      ${this.footer()}
      <div class="brand">
        ${draw(52, 44, svg`<g stroke="none"><path d="M3 18C12 -4 50 -6 51 17C50 22 48 26 45 29C54 8 38 -1 22 6C13 9 8 13 3 18Z" fill="#92c13e"/><path d="M5 13C-2 22 -1 35 10 39C24 45 42 37 49 22C40 36 24 38 14 33C6 29 3 22 5 13Z" fill="#1c4aa0"/><path d="M15 11L24 6V34L15 33Z" fill="#1f4da3"/><path d="M24 6L29 9V34L24 34Z" fill="#4a78c4"/><path d="M29 12L35 9L38 13V20L32 20L29 24Z" fill="#c4ccd6"/><path d="M6 24L12 21V32L6 28Z" fill="#2554a8"/><path d="M30 22L36 16L39 19V31L30 34Z" fill="#1f4da3"/><path d="M40 20L48 17V22L40 29Z" fill="#c4ccd6"/></g>`)}
        <div><div class="brand-name">土木工程网</div><div class="brand-url">www.civilcn.com</div></div>
      </div>`;
  }
}
